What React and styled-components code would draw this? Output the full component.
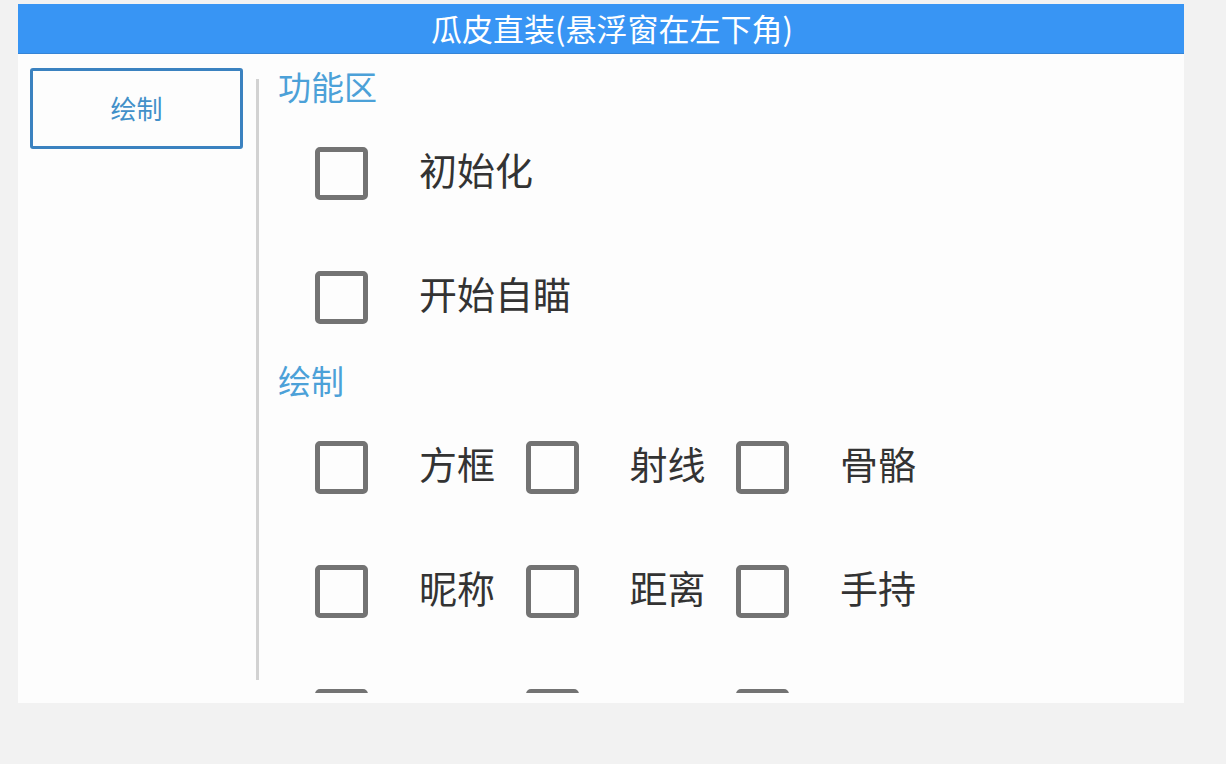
import React from "react";
import styled, { createGlobalStyle } from "styled-components";

const Global = createGlobalStyle`
  html, body { margin: 0; padding: 0; background: #f2f2f2; }
  body { font-family: "Noto Sans CJK SC", "Noto Sans", sans-serif; }
`;

const Page = styled.div`
  width: 1226px;
  height: 764px;
  padding-top: 4px;
  padding-left: 18px;
  box-sizing: border-box;
`;

const Panel = styled.div`
  width: 1166px;
  height: 699px;
  background: #fdfdfd;
  display: flex;
  flex-direction: column;
`;

const Header = styled.div`
  height: 50px;
  background: #3895f4;
  border-bottom: 1px solid #3584d6;
  box-sizing: border-box;
  color: #ffffff;
  font-size: 31px;
  display: flex;
  align-items: center;
  justify-content: center;
  padding: 0 0 2px 22px;
`;

const Body = styled.div`
  flex: 1;
  display: flex;
  min-height: 0;
`;

const Sidebar = styled.div`
  width: 238px;
  padding: 14px 0 0 12px;
  box-sizing: border-box;
`;

const TabButton = styled.div`
  width: 213px;
  height: 81px;
  box-sizing: border-box;
  border: 3px solid #3b82c0;
  border-radius: 3px;
  display: flex;
  align-items: center;
  justify-content: center;
  color: #4290c9;
  font-size: 26px;
  padding-bottom: 3px;
`;

const Divider = styled.div`
  width: 3px;
  background: #d2d2d2;
  margin-top: 25px;
  height: 601px;
  flex-shrink: 0;
`;

const Content = styled.div`
  flex: 1;
  height: 639px;
  overflow: hidden;
  padding: 11px 0 0 19px;
  box-sizing: border-box;
`;

const SectionTitle = styled.div`
  height: 46px;
  display: flex;
  align-items: center;
  color: #4ca1d8;
  font-size: 33px;
  padding-bottom: 4px;
  box-sizing: border-box;
`;

const Row = styled.div`
  height: 124px;
  display: flex;
  align-items: center;
  padding-left: 37px;
`;

const Grid = styled.div`
  display: grid;
  grid-template-columns: repeat(3, 210.5px);
  grid-auto-rows: 124px;
  padding-left: 37px;
`;

const Item = styled.div`
  display: flex;
  align-items: center;
`;

const Box = styled.div`
  width: 53px;
  height: 53px;
  box-sizing: border-box;
  border: 5px solid #737373;
  border-radius: 5px;
  flex-shrink: 0;
`;

const Label = styled.span`
  margin-left: 51px;
  padding-bottom: 9px;
  font-size: 38px;
  color: #333333;
  white-space: nowrap;
`;

const Check = ({ label }) => (
  <Item>
    <Box />
    {label && <Label>{label}</Label>}
  </Item>
);

export default function App() {
  const grid = ["方框", "射线", "骨骼", "昵称", "距离", "手持", "", "", ""];
  return (
    <>
      <Global />
      <Page>
        <Panel>
          <Header>瓜皮直装(悬浮窗在左下角)</Header>
          <Body>
            <Sidebar>
              <TabButton>绘制</TabButton>
            </Sidebar>
            <Divider />
            <Content>
              <SectionTitle>功能区</SectionTitle>
              <Row>
                <Check label="初始化" />
              </Row>
              <Row>
                <Check label="开始自瞄" />
              </Row>
              <SectionTitle>绘制</SectionTitle>
              <Grid>
                {grid.map((g, i) => (
                  <Check key={i} label={g} />
                ))}
              </Grid>
            </Content>
          </Body>
        </Panel>
      </Page>
    </>
  );
}
